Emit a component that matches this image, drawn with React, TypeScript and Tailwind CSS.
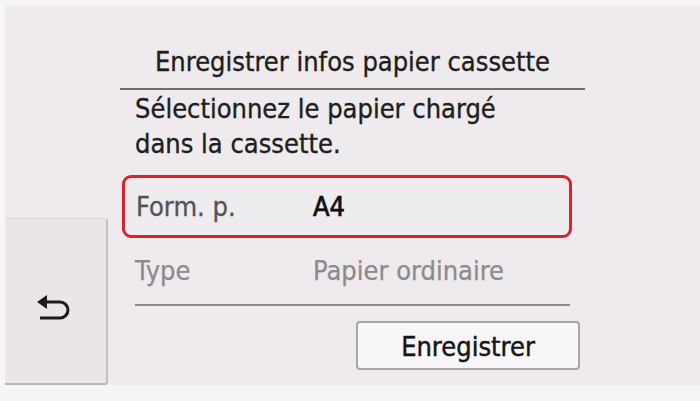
import React from 'react';

const FONT = "font-['DejaVu_Sans_Condensed','Liberation_Sans_Narrow','Liberation_Sans',sans-serif]";

function BackIcon() {
  return (
    <svg width="40" height="32" viewBox="0 0 40 32" fill="none">
      <path d="M4 11 L14 4 L14 18 Z" fill="#1b1b1b" />
      <path d="M13 11 H27 A8 8 0 0 1 27 27 H7" stroke="#1b1b1b" strokeWidth="3" fill="none" />
    </svg>
  );
}

export default function App() {
  return (
    <div className={`w-[700px] h-[401px] bg-[#f7f4f6] pt-[6px] pl-[5px] overflow-hidden ${FONT}`}>
      <div className="flex h-[379px] bg-[#eeeaed]">
        {/* Back button */}
        <div className="w-[103px] flex flex-col">
          <div className="mt-[212px] h-[167px] flex items-center justify-center bg-[#e9e5e8] border-t border-t-[#dcd8db] border-r-2 border-r-[#c2bec1] border-b-2 border-b-[#b9b5b8] rounded-tr-[3px] rounded-br-[3px]">
            <div className="mt-[12px] mr-[6px]">
              <BackIcon />
            </div>
          </div>
        </div>

        {/* Main column */}
        <div className="ml-[12px] w-[465px] flex flex-col">
          <div className="pt-[39px] pb-[9px] text-center text-[27px] leading-[34px] text-[#1e1e1e] [-webkit-text-stroke:0.35px_#1e1e1e] border-b-2 border-b-[#6f6c6e]">
            Enregistrer infos papier cassette
          </div>

          <div className="pl-[15px] mt-[1px] text-[27px] leading-[35px] text-[#1e1e1e] [-webkit-text-stroke:0.35px_#1e1e1e]">
            <div>Sélectionnez le papier chargé</div>
            <div>dans la cassette.</div>
          </div>

          <div className="ml-[2px] mt-[14px] w-[450px] h-[63px] flex items-center border-[3px] border-[#d9222d] rounded-[9px] bg-[#efecef] text-[27px] leading-[32px]">
            <span className="pl-[11px] w-[188px] text-[#555355] [-webkit-text-stroke:0.3px_#555355]">Form. p.</span>
            <span className="text-[#111111] [-webkit-text-stroke:0.7px_#111111]">A4</span>
          </div>

          <div className="ml-[15px] w-[435px] h-[68px] flex items-center text-[27px] leading-[32px] text-[#8c8a8c] [-webkit-text-stroke:0.25px_#8c8a8c] border-b-2 border-b-[#8e8b8d]">
            <span className="w-[178px]">Type</span>
            <span>Papier ordinaire</span>
          </div>

          <button className="ml-[236px] mt-[15px] w-[224px] h-[49px] pt-[3px] rounded-[4px] border-2 border-[#a9a6a8] bg-[#f8f6f8] text-[27px] leading-[32px] text-[#161616] [-webkit-text-stroke:0.45px_#161616] flex items-center justify-center">
            Enregistrer
          </button>
        </div>
      </div>
    </div>
  );
}
